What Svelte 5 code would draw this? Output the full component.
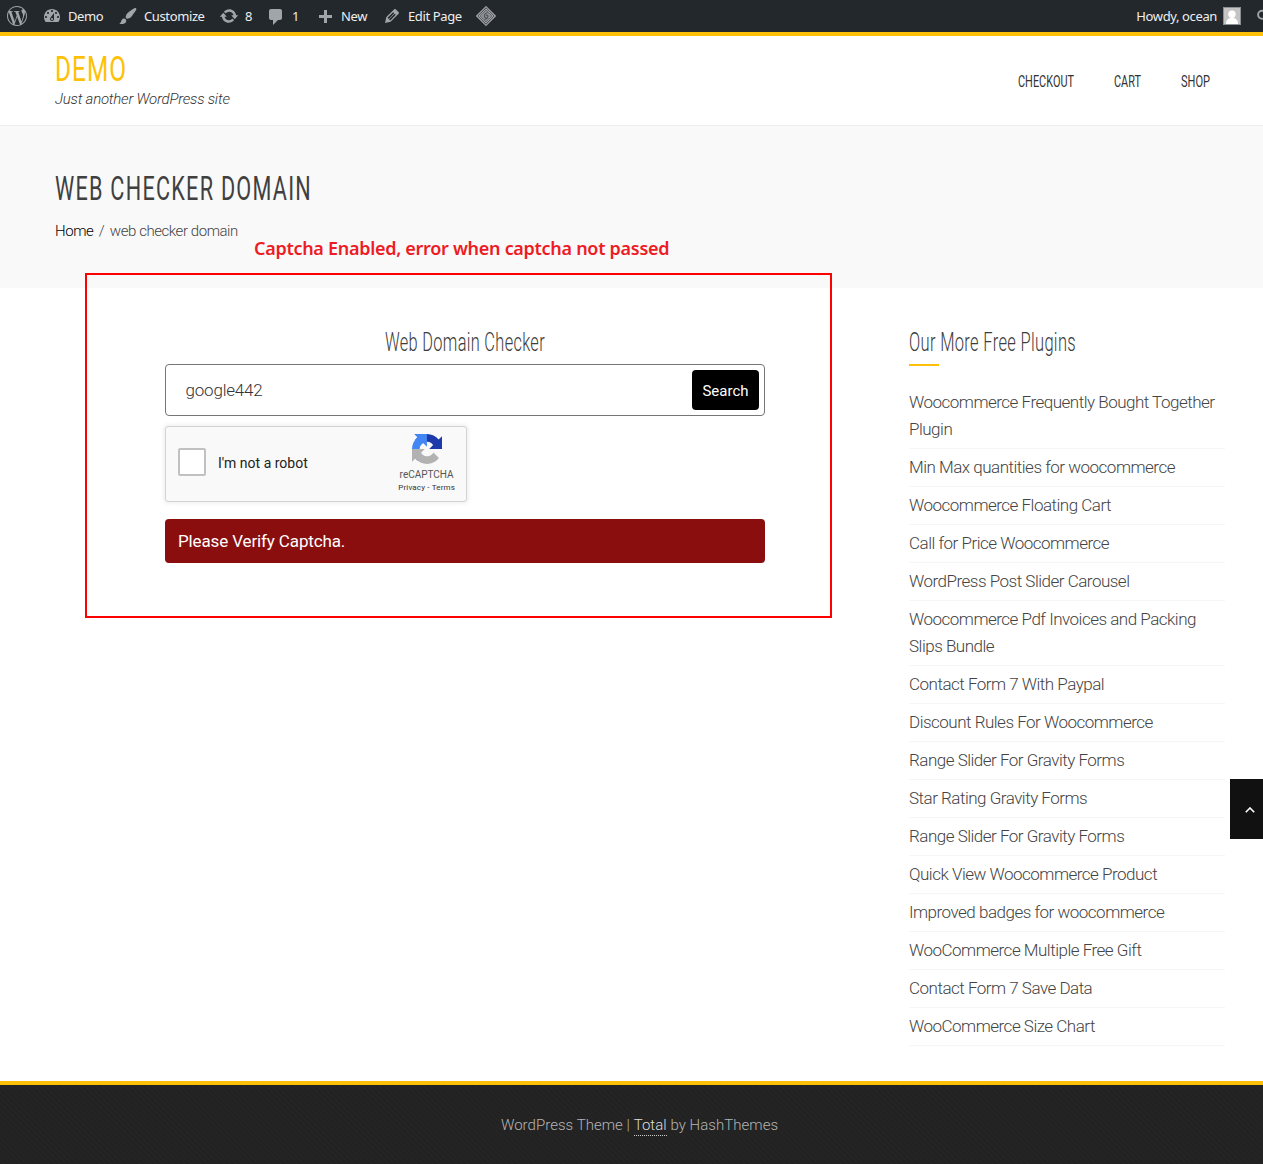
<script>
  const ICONS = {
    wordpress: 'M21.469 6.825c.84 1.537 1.318 3.3 1.318 5.175 0 3.979-2.156 7.456-5.363 9.325l3.295-9.527c.615-1.54.82-2.771.82-3.864 0-.405-.026-.78-.07-1.11m-7.981.105c.647-.03 1.232-.105 1.232-.105.582-.075.514-.93-.067-.899 0 0-1.755.135-2.88.135-1.064 0-2.85-.15-2.85-.15-.585-.03-.661.855-.075.885 0 0 .54.061 1.125.09l1.68 4.605-2.37 7.08L5.354 6.9c.649-.03 1.234-.1 1.234-.1.585-.075.516-.93-.065-.896 0 0-1.746.138-2.874.138-.2 0-.438-.008-.69-.015C4.911 3.15 8.235 1.215 12 1.215c2.809 0 5.365 1.072 7.286 2.833-.046-.003-.091-.009-.141-.009-1.06 0-1.812.923-1.812 1.914 0 .89.513 1.643 1.06 2.531.411.72.89 1.643.89 2.977 0 .915-.354 1.994-.821 3.479l-1.075 3.585-3.9-11.61.001.014zM12 22.784c-1.059 0-2.081-.153-3.048-.437l3.237-9.406 3.315 9.087c.024.053.05.101.078.149-1.12.393-2.325.609-3.582.609M1.211 12c0-1.564.336-3.05.935-4.39L7.29 21.709C3.694 19.96 1.212 16.271 1.211 12M12 0C5.385 0 0 5.385 0 12s5.385 12 12 12 12-5.385 12-12S18.615 0 12 0',
    dashboard: 'M3.76 16h12.48c1.1-1.37 1.76-3.11 1.76-5 0-4.42-3.58-8-8-8s-8 3.58-8 8c0 1.89.66 3.63 1.76 5zM10 4c.55 0 1 .45 1 1s-.45 1-1 1-1-.45-1-1 .45-1 1-1zM6 6c.55 0 1 .45 1 1s-.45 1-1 1-1-.45-1-1 .45-1 1-1zm8 0c.55 0 1 .45 1 1s-.45 1-1 1-1-.45-1-1 .45-1 1-1zm-5.37 5.55L12 7v6c0 1.1-.9 2-2 2s-2-.9-2-2c0-.57.24-1.08.63-1.45zM4 10c.55 0 1 .45 1 1s-.45 1-1 1-1-.45-1-1 .45-1 1-1zm12 0c.55 0 1 .45 1 1s-.45 1-1 1-1-.45-1-1 .45-1 1-1zm-5 3c0-.55-.45-1-1-1s-1 .45-1 1 .45 1 1 1 1-.45 1-1z',
    brush: 'M18.33 3.57s.27-.8-.31-1.36c-.53-.52-1.22-.24-1.22-.24-.61.3-5.76 3.47-7.67 5.57-.86.96-2.06 3.79-1.09 4.82.92.98 3.96-.17 4.79-1 2.06-2.06 5.21-7.17 5.5-7.79zM1.4 17.65c2.37-1.56 1.46-3.41 3.23-4.64.93-.65 2.22-.62 3.08.29.63.67.8 2.57-.16 3.46-1.57 1.45-4 1.55-6.15.89z',
    update: 'M10.2 3.28c3.53 0 6.43 2.61 6.92 6h2.08l-3.5 4-3.5-4h2.32c-.45-1.97-2.21-3.45-4.32-3.45-1.45 0-2.73.71-3.54 1.78L4.95 5.66C6.23 4.2 8.11 3.28 10.2 3.28zm-.4 13.44c-3.52 0-6.43-2.61-6.92-6H.8l3.5-4c1.17 1.33 2.33 2.67 3.5 4H5.48c.45 1.97 2.21 3.45 4.32 3.45 1.45 0 2.73-.71 3.54-1.78l1.71 1.95c-1.28 1.46-3.15 2.38-5.25 2.38z',
    comment: 'M5 2h9c1.1 0 2 .9 2 2v7c0 1.1-.9 2-2 2h-2l-5 5v-5H5c-1.1 0-2-.9-2-2V4c0-1.1.9-2 2-2z',
    plus: 'M17 7v3h-5v5H9v-5H4V7h5V2h3v5h5z',
    edit: 'M13.89 3.39l2.71 2.72c.46.46.42 1.24.03 1.64l-8.01 8.02-5.56 1.16 1.16-5.58s7.6-7.63 7.99-8.03c.39-.39 1.22-.39 1.68.07zm-2.73 2.79l-5.59 5.61 1.11 1.11 5.54-5.65zm-2.97 8.23l5.58-5.6-1.07-1.08-5.59 5.6z'
  };

  const adminItems = [
    { icon: 'dashboard', label: 'Demo' },
    { icon: 'brush', label: 'Customize' },
    { icon: 'update', label: '8' },
    { icon: 'comment', label: '1' },
    { icon: 'plus', label: 'New' },
    { icon: 'edit', label: 'Edit Page' }
  ];

  const nav = [
    { label: 'CHECKOUT', width: 56 },
    { label: 'CART', width: 27 },
    { label: 'SHOP', width: 29 }
  ];

  const plugins = [
    'Woocommerce Frequently Bought Together Plugin',
    'Min Max quantities for woocommerce',
    'Woocommerce Floating Cart',
    'Call for Price Woocommerce',
    'WordPress Post Slider Carousel',
    'Woocommerce Pdf Invoices and Packing Slips Bundle',
    'Contact Form 7 With Paypal',
    'Discount Rules For Woocommerce',
    'Range Slider For Gravity Forms',
    'Star Rating Gravity Forms',
    'Range Slider For Gravity Forms',
    'Quick View Woocommerce Product',
    'Improved badges for woocommerce',
    'WooCommerce Multiple Free Gift',
    'Contact Form 7 Save Data',
    'WooCommerce Size Chart'
  ];

  let domain = $state('google442');
</script>

<!-- Condensed heading text: glyphs are narrowed to the given width -->
{#snippet condensed(text, width, height, baseline, kind)}
  <svg class="cond {kind}" {width} {height}>
    <text x="0" y={baseline} textLength={width} lengthAdjust="spacingAndGlyphs">{text}</text>
  </svg>
{/snippet}

<div class="page">
  <div class="adminbar">
    <div class="admin-left">
      <svg class="wp" viewBox="0 0 24 24"><path d={ICONS.wordpress} /></svg>
      {#each adminItems as item}
        <a class="admin-item" href="#top">
          <svg class={item.icon} viewBox="0 0 20 20"><path d={ICONS[item.icon]} /></svg>
          <span>{item.label}</span>
        </a>
      {/each}
      <svg class="diamond" viewBox="0 0 20 20">
        <path class="fill" d="M10 4.2 15.8 10 10 15.8 4.2 10z" />
        <path d="M10 .7 19.3 10 10 19.3.7 10z" />
        <path d="M10 3 17 10 10 17 3 10z" />
        <path class="mark" d="M11.5 6.6 8.7 8.3v3.2l1.6.8 1.600-1.100V9.500l-1.800-.400M8.500 13.600l3-1.400" />
      </svg>
    </div>
    <div class="admin-right">
      <span>Howdy, ocean</span>
      <svg class="avatar" viewBox="0 0 18 18">
        <rect x=".5" y=".5" width="17" height="17" fill="#c4c4c4" stroke="#8c8f94" />
        <circle cx="9" cy="7.2" r="3.7" fill="#fff" />
        <path d="M3 17c0-4 2.2-6.3 6-6.3s6 2.300 6 6.300z" fill="#fff" />
      </svg>
      <svg class="lens" viewBox="0 0 7 20">
        <circle cx="6" cy="8.500" r="4.700" />
      </svg>
    </div>
  </div>

  <header>
    <div class="brand">
      {@render condensed('DEMO', 72, 32, 27.5, 'logo')}
      <p>Just another WordPress site</p>
    </div>
    <nav>
      {#each nav as item}
        <a href="#top">{@render condensed(item.label, item.width, 20, 15.5, 'navlink')}</a>
      {/each}
    </nav>
  </header>

  <section class="banner">
    {@render condensed('WEB CHECKER DOMAIN', 257, 34, 28.5, 'title')}
    <p><a href="#top">Home</a><span class="slash">/</span>web checker domain</p>
  </section>

  <main>
    <section class="checker">
      {@render condensed('Web Domain Checker', 160, 30, 25, 'sub')}
      <div class="field">
        <input type="text" aria-label="Domain" bind:value={domain} />
        <button type="button">Search</button>
      </div>
      <div class="captcha">
        <span class="box"></span>
        <span class="robot">I'm not a robot</span>
        <div class="recaptcha">
          <svg viewBox="0 0 64 64">
            <path fill="#1c3aa9" d="M64 31.955l-.033-1.37V4.687l-7.16 7.16C50.948 4.674 42.033.093 32.05.093c-10.4 0-19.622 4.96-25.458 12.64l11.736 11.86a15.55 15.55 0 0 1 4.754-5.334c2.05-1.6 4.952-2.906 8.968-2.906.485 0 .86.057 1.135.163 4.976.393 9.288 3.14 11.828 7.124l-8.307 8.307L64 31.953" />
            <path fill="#4285f4" d="M31.862.094l-1.37.033H4.594l7.16 7.16C4.58 13.147 0 22.06 0 32.046c0 10.4 4.96 19.622 12.64 25.458L24.5 45.768a15.55 15.55 0 0 1-5.334-4.754c-1.6-2.05-2.906-4.952-2.906-8.968 0-.485.057-.86.163-1.135.393-4.976 3.14-9.288 7.124-11.828l8.307 8.307L31.86.095" />
            <path fill="#b2b2b2" d="M.001 32.045l.033 1.37v25.898l7.16-7.16c5.86 7.173 14.774 11.754 24.76 11.754 10.4 0 19.622-4.96 25.458-12.64l-11.736-11.86a15.55 15.55 0 0 1-4.754 5.334c-2.05 1.6-4.952 2.906-8.968 2.906-.485 0-.86-.057-1.135-.163-4.976-.393-9.288-3.14-11.828-7.124l8.307-8.307c-10.522.04-22.4.066-27.295-.005" />
          </svg>
          <span class="name">reCAPTCHA</span>
          <span class="legal">Privacy&nbsp;-&nbsp;Terms</span>
        </div>
      </div>
      <div class="error">Please Verify Captcha.</div>
    </section>

    <aside>
      {@render condensed('Our More Free Plugins', 167, 30, 25, 'sub')}
      <div class="rule"></div>
      <ul>
        {#each plugins as plugin}
          <li>{plugin}</li>
        {/each}
      </ul>
    </aside>
  </main>

  <footer>
    <p>WordPress Theme <span class="bar">|</span> <a href="#top">Total</a> by HashThemes</p>
  </footer>

  <!-- Annotation drawn over the page -->
  <div class="note">Captcha Enabled, error when captcha not passed</div>
  <div class="frame"></div>

  <a class="to-top" href="#top" aria-label="Back to top">
    <svg viewBox="0 0 10 6"><path d="M.8 5.2 5 1l4.200 4.200" /></svg>
  </a>
</div>

<style>
  :global(body) { margin: 0; background: #fff; }
  * { box-sizing: border-box; }
  p, ul { margin: 0; padding: 0; }
  a { color: inherit; text-decoration: none; }
  svg { display: block; flex: none; }

  .page {
    position: relative;
    width: 1263px;
    height: 1164px;
    overflow: hidden;
    display: flex;
    flex-direction: column;
    font-family: Roboto, "Liberation Sans", sans-serif;
    font-weight: 300;
    color: #444;
  }

  .cond { overflow: visible; font-family: Roboto, sans-serif; fill: #3c3c3c; }
  .logo { font-size: 35.500px; font-weight: 400; fill: #ffc107; letter-spacing: 1.500px; }
  .navlink { font-size: 17.300px; font-weight: 400; fill: #333; }
  .title { font-size: 34px; font-weight: 400; fill: #404040; letter-spacing: 2px; }
  .sub { font-size: 25.500px; font-weight: 300; letter-spacing: 0.500px; }

  .adminbar {
    height: 32px;
    flex: none;
    background: #23282d;
    color: #eee;
    display: flex;
    justify-content: space-between;
    font: 400 13px/32px "Noto Sans", sans-serif;
    letter-spacing: -0.38px;
  }
  .admin-left {
    display: grid;
    grid-template-columns: 35px 76px 101px 47px 49px 67px 94px 20px;
    align-items: center;
    padding-left: 7px;
  }
  .admin-left svg { width: 20px; height: 20px; fill: #a0a5aa; }
  .admin-item { display: flex; align-items: center; gap: 6px; white-space: nowrap; }
  .admin-item .plus { margin-top: 3px; }
  .admin-left .dashboard { margin-top: -1px; }
  .admin-item .comment { margin-top: 1px; }
  .admin-left .diamond { fill: none; stroke: #a0a5aa; stroke-width: 1.200; margin-top: -1px; }
  .admin-left .diamond .fill { fill: #8b9095; stroke: none; }
  .admin-left .diamond .mark { stroke: #3d4247; stroke-width: 0.900; }
  .admin-right { display: flex; align-items: center; }
  .avatar { width: 18px; height: 18px; margin: 0 16px 0 6px; }
  .lens { width: 6px; height: 20px; }
  .lens { fill: none; stroke: #a0a5aa; stroke-width: 2.200; }

  header {
    height: 94px;
    flex: none;
    border-top: 4px solid #ffc107;
    border-bottom: 1px solid #eee;
    display: flex;
    justify-content: space-between;
    padding: 17px 53px 0 55px;
  }
  .brand p {
    margin-top: 4px;
    font-size: 15px;
    line-height: 20px;
    font-style: italic;
    color: #333;
    letter-spacing: -0.22px;
  }
  nav { display: flex; gap: 40px; padding-top: 18px; }

  .banner {
    height: 162px;
    flex: none;
    background: #f9f9f9;
    padding: 45px 55px 0 55px;
  }
  .banner p { margin-top: 15px; font-size: 15px; line-height: 22px; letter-spacing: -0.44px; }
  .banner a { color: #000; }
  .slash { margin: 0 5.500px; }

  main {
    flex: 1;
    display: grid;
    grid-template-columns: 600px 316px;
    column-gap: 144px;
    align-content: start;
    padding: 38px 0 0 165px;
  }
  .checker > .cond { margin: 0 auto; }
  .field {
    height: 52px;
    margin-top: 8px;
    border: 1px solid #767676;
    border-radius: 4px;
    padding: 5px;
    display: flex;
  }
  input {
    flex: 1;
    min-width: 0;
    border: 0;
    outline: 0;
    background: none;
    padding: 0 14.500px;
    font: 300 17px Roboto, sans-serif;
    letter-spacing: -0.2px;
    color: #333;
  }
  button {
    width: 67px;
    height: 40px;
    border: 0;
    border-radius: 4px;
    padding: 1px 0 0;
    background: #000;
    color: #fff;
    font: 400 15px Roboto, sans-serif;
  }
  .captcha {
    width: 302px;
    height: 76px;
    margin-top: 10px;
    padding: 0 11px 0 12px;
    border: 1px solid #d3d3d3;
    border-radius: 3px;
    background: #f9f9f9;
    box-shadow: 0 0 4px 1px rgba(0, 0, 0, 0.08);
    display: flex;
    align-items: center;
  }
  .box { width: 28px; height: 28px; margin-top: -4px; border: 2px solid #c1c1c1; border-radius: 2px; background: #fff; }
  .robot { margin: -2px 0 0 12px; font-size: 14px; font-weight: 400; color: #222; }
  .recaptcha {
    align-self: stretch;
    margin-left: auto;
    padding-top: 7px;
    display: flex;
    flex-direction: column;
    align-items: center;
    font-weight: 400;
    color: #555;
  }
  .recaptcha svg { width: 30px; height: 30px; }
  .name { margin-top: 4px; font-size: 10px; line-height: 13px; }
  .legal { font-size: 8px; line-height: 14px; letter-spacing: 0.15px; color: #333; }
  .error {
    height: 44px;
    margin-top: 17px;
    padding-left: 13px;
    border-radius: 4px;
    background: #8a0e0e;
    color: #fff;
    font-size: 17px;
    font-weight: 400;
    line-height: 44px;
    letter-spacing: -0.13px;
  }

  .rule { width: 30px; height: 2px; margin-top: 8px; background: #ffc107; }
  ul { list-style: none; margin-top: 18px; }
  li {
    padding: 5px 0;
    border-bottom: 1px solid #f6f6f6;
    font-size: 17px;
    line-height: 27px;
    letter-spacing: -0.5px;
  }

  footer {
    height: 83px;
    flex: none;
    border-top: 4px solid #ffc107;
    background: repeating-linear-gradient(45deg, #222 0 2px, #242424 2px 4px);
    color: #b4b4b4;
    text-align: center;
    font-size: 15px;
    line-height: 22px;
    letter-spacing: 0.04px;
    padding: 29px 0 0 16px;
  }
  footer a { color: #ddd; display: inline-block; line-height: 20px; border-bottom: 1px dotted #ccc; }

  .note {
    position: absolute;
    left: 254px;
    top: 235px;
    font: 600 18px/26px "Noto Sans", sans-serif;
    letter-spacing: -0.29px;
    color: #ed1c24;
    white-space: nowrap;
  }
  .frame { position: absolute; left: 85px; top: 273px; width: 747px; height: 345px; border: 2px solid #f00; }
  .to-top {
    position: absolute;
    left: 1230px;
    top: 779px;
    width: 40px;
    height: 60px;
    background: #111;
    display: grid;
    place-items: center;
  }
  .to-top svg { width: 10px; height: 6px; margin-top: 2px; fill: none; stroke: #fff; stroke-width: 1.600; }
</style>
